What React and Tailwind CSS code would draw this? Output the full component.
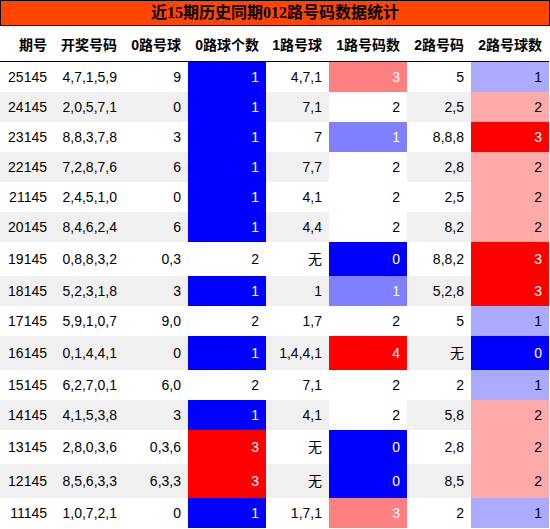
import React from "react";

const rows = [
  ["25145", "4,7,1,5,9", "9", "1", "4,7,1", "3", "5", "1"],
  ["24145", "2,0,5,7,1", "0", "1", "7,1", "2", "2,5", "2"],
  ["23145", "8,8,3,7,8", "3", "1", "7", "1", "8,8,8", "3"],
  ["22145", "7,2,8,7,6", "6", "1", "7,7", "2", "2,8", "2"],
  ["21145", "2,4,5,1,0", "0", "1", "4,1", "2", "2,5", "2"],
  ["20145", "8,4,6,2,4", "6", "1", "4,4", "2", "8,2", "2"],
  ["19145", "0,8,8,3,2", "0,3", "2", "无", "0", "8,8,2", "3"],
  ["18145", "5,2,3,1,8", "3", "1", "1", "1", "5,2,8", "3"],
  ["17145", "5,9,1,0,7", "9,0", "2", "1,7", "2", "5", "1"],
  ["16145", "0,1,4,4,1", "0", "1", "1,4,4,1", "4", "无", "0"],
  ["15145", "6,2,7,0,1", "6,0", "2", "7,1", "2", "2", "1"],
  ["14145", "4,1,5,3,8", "3", "1", "4,1", "2", "5,8", "2"],
  ["13145", "2,8,0,3,6", "0,3,6", "3", "无", "0", "2,8", "2"],
  ["12145", "8,5,6,3,3", "6,3,3", "3", "无", "0", "8,5", "2"],
  ["11145", "1,0,7,2,1", "0", "1", "1,7,1", "3", "2", "1"],
];

const headers = ["期号", "开奖号码", "0路号球", "0路球个数", "1路号球", "1路号码数", "2路号码", "2路号球数"];

const col4 = {
  "1": "bg-[#0000ff] text-white",
  "3": "bg-[#ff0000] text-white",
  "2": "bg-white text-black",
};
const col6 = {
  "0": "bg-[#0000ff] text-white",
  "1": "bg-[#8080ff] text-white",
  "2": "bg-white text-black",
  "3": "bg-[#ff8080] text-white",
  "4": "bg-[#ff0000] text-white",
};
const col8 = {
  "0": "bg-[#0000ff] text-white",
  "1": "bg-[#aaaaff] text-black",
  "2": "bg-[#ffaaaa] text-black",
  "3": "bg-[#ff0000] text-white",
};

export default function App() {
  return (
    <div
      className="w-[550px] bg-white text-black"
      style={{ fontFamily: '"Liberation Sans", "Noto Sans CJK SC", sans-serif' }}
    >
      <div
        className="h-[26px] w-[550px] border border-black bg-[#ff4500] flex items-center justify-center text-[16px] font-bold leading-none"
        style={{ fontFamily: '"Liberation Serif", "Noto Sans CJK SC", serif' }}
      >
        近15期历史同期012路号码数据统计
      </div>
      <div className="grid w-[549px] grid-cols-[54px_70px_64px_78px_63px_78px_64px_78px]">
        {headers.map((h) => (
          <div
            key={h}
            className="h-[36px] border-b border-black flex items-center justify-end pr-[7px] pt-[3px] text-[14px] font-bold whitespace-nowrap"
          >
            {h}
          </div>
        ))}
        {rows.map((r, i) => {
          const tall = r.includes("无");
          const h = tall ? "h-[34px]" : "h-[30px]";
          const stripe = i % 2 === 1 ? "bg-[#f0f0f0]" : "bg-white";
          return r.map((v, j) => {
            let color = stripe;
            if (j === 3) color = col4[v];
            if (j === 5) color = col6[v];
            if (j === 7) color = col8[v];
            return (
              <div
                key={i + "-" + j}
                className={`${h} ${color} flex items-center justify-end pr-[7px] text-[14px] whitespace-nowrap`}
              >
                {v}
              </div>
            );
          });
        })}
      </div>
    </div>
  );
}
